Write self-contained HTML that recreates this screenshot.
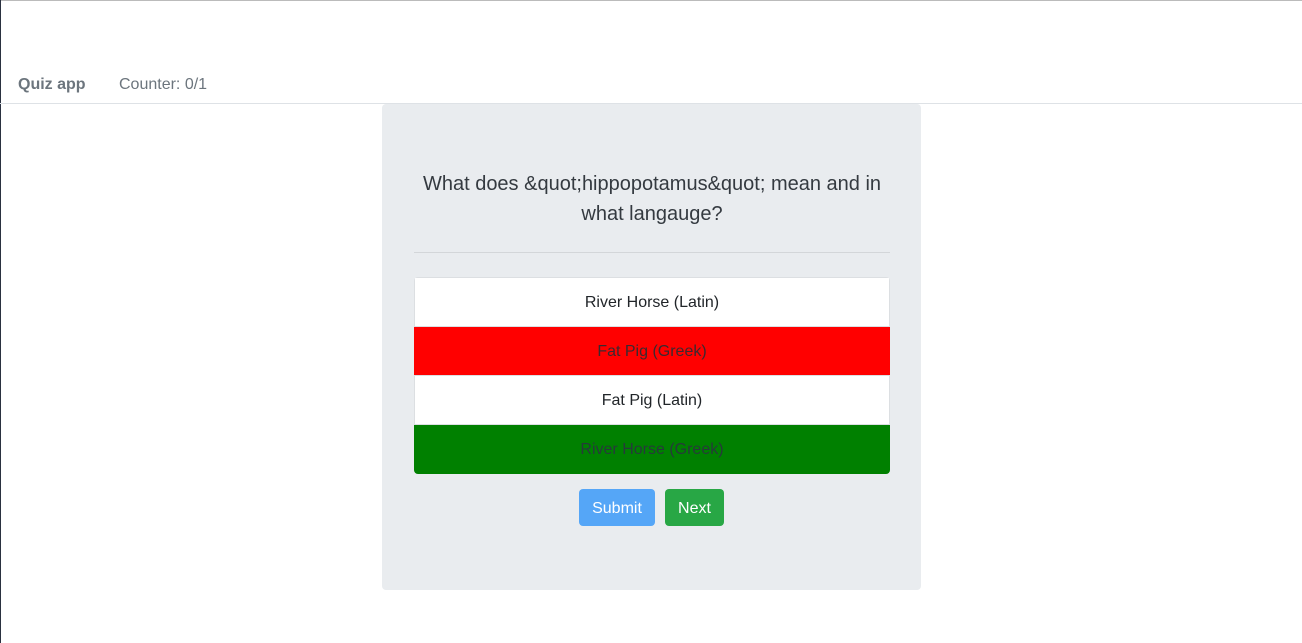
<!DOCTYPE html>
<html><head><style>
body{margin:0;width:1302px;height:643px;background:#fff;font-family:"Liberation Sans",sans-serif;position:relative;overflow:hidden}
.topline{position:absolute;left:0;top:0;width:1302px;height:1px;background:#bbb}
.leftline{position:absolute;left:0;top:0;width:1px;height:643px;background:#2a3140}
.nav{position:absolute;left:0;top:103px;width:1302px;height:1px;background:#dee2e6}
.brand{position:absolute;left:18px;top:76px;font-size:16px;font-weight:bold;color:#6c757d}
.ctr{position:absolute;left:119px;top:76px;font-size:16px;color:#6c757d}
.card{position:absolute;left:382px;top:104px;width:539px;height:486px;background:#e9ecef;border-radius:4px}
.q{position:absolute;left:414px;top:169px;width:476px;text-align:center;font-size:20px;line-height:30px;color:#343a40}
.hr{position:absolute;left:414px;top:252px;width:476px;height:1px;background:#d3d6d9}
.list{position:absolute;left:414px;top:277px;width:476px;height:197px;border-radius:4px;overflow:hidden;background:#dcdfe2}
.it{position:absolute;left:0;width:476px;text-align:center;font-size:16px;color:#212529}
.btn{position:absolute;top:489px;height:37px;line-height:39px;font-size:16px;color:#fff;border-radius:4px;text-align:center}
</style></head><body>
<div class="topline"></div><div class="leftline"></div>
<div class="brand">Quiz app</div><div class="ctr">Counter: 0/1</div>
<div class="nav"></div>
<div class="card"></div>
<div class="q">What does &amp;quot;hippopotamus&amp;quot; mean and in what langauge?</div>
<div class="hr"></div>
<div class="list">
<div class="it" style="background:#fff;top:1px;left:1px;width:474px;height:48px;line-height:50px">River Horse (Latin)</div>
<div class="it" style="background:#f00;color:#3a2a30;top:50px;height:48px;line-height:50px">Fat Pig (Greek)</div>
<div class="it" style="background:#fff;top:99px;left:1px;width:474px;height:48px;line-height:50px">Fat Pig (Latin)</div>
<div class="it" style="background:#008000;color:#263a3a;top:148px;height:49px;line-height:50px">River Horse (Greek)</div>
</div>
<div class="btn" style="left:579px;width:76px;background:#55a6f7">Submit</div>
<div class="btn" style="left:665px;width:59px;background:#28a745">Next</div>
</body></html>
